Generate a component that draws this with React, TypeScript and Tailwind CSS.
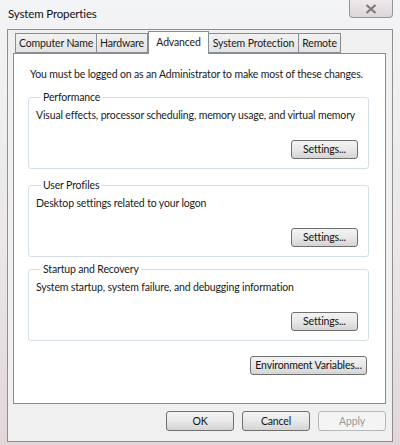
import React from "react";

const tabs = [
  { label: "Computer Name", w: "w-[82px]" },
  { label: "Hardware", w: "w-[52px]" },
  { label: "Advanced", w: "w-[61px]", active: true },
  { label: "System Protection", w: "w-[91px]" },
  { label: "Remote", w: "w-[43px]" },
];

const groups = [
  {
    title: "Performance",
    text: "Visual effects, processor scheduling, memory usage, and virtual memory",
    mt: "mt-[8px]",
  },
  { title: "User Profiles", text: "Desktop settings related to your logon", mt: "mt-[9px]" },
  {
    title: "Startup and Recovery",
    text: "System startup, system failure, and debugging information",
    mt: "mt-[5px]",
  },
];

function Button({
  children,
  className = "",
  disabled = false,
}: {
  children: React.ReactNode;
  className?: string;
  disabled?: boolean;
}) {
  return (
    <button
      className={
        "flex items-center justify-center whitespace-nowrap rounded-[3px] border text-[10.5px] leading-none tracking-[-0.15px] " +
        (disabled
          ? "border-[#b5b9bc] bg-[#f4f4f4] text-[#9a9a9a] "
          : "border-[#707070] bg-gradient-to-b from-[#f3f3f3] via-[#e8e8e8] to-[#d4d4d4] text-[#111] ") +
        className
      }
    >
      {children}
    </button>
  );
}

export default function App() {
  return (
    <div className="flex h-[445px] w-[400px] flex-col whitespace-nowrap bg-gradient-to-b from-[#f3f4f6] via-[#ece8ea] to-[#e2d6d9] font-['Lato','Liberation_Sans',sans-serif] tracking-[-0.15px] text-[#1a1a1a]">
      {/* Title bar */}
      <div className="flex h-[29px] shrink-0 items-start justify-between">
        <span className="mt-[6px] pl-[8px] text-[11.5px] leading-[16px] text-[#111]">System Properties</span>
        <div className="mr-[7px] flex h-[18px] w-[44px] items-center justify-center rounded-b-[4px] border border-t-0 border-[#9a9298] bg-gradient-to-b from-[#eeeaec] to-[#ddd6d9]">
          <svg width="12" height="10" viewBox="0 0 12 10">
            <path d="M1.5 1 L10.5 9 M10.5 1 L1.5 9" stroke="#7a7a7a" strokeWidth="2.2" fill="none" />
          </svg>
        </div>
      </div>

      {/* Client area */}
      <div className="mx-[7px] mb-[3px] flex flex-1 flex-col border border-[#8f8f90] bg-[#f0f0f0] pt-[1px]">
        <div className="ml-[5px] mr-[6px] flex flex-col">
          {/* Tabs */}
          <div className="relative z-10 flex h-[22px] items-end pl-[2px]">
            {tabs.map((t) =>
              t.active ? (
                <div
                  key={t.label}
                  className={`${t.w} -mb-px flex h-[23px] items-start justify-center border border-b-0 border-[#898c95] bg-white pt-[3px] text-[10.5px] leading-[14px]`}
                >
                  {t.label}
                </div>
              ) : (
                <div
                  key={t.label}
                  className={`${t.w} flex h-[20px] items-center justify-center border border-[#898c95] bg-gradient-to-b from-[#f2f2f2] to-[#e3e3e3] text-[10.5px] leading-[14px] -ml-px first:ml-0`}
                >
                  {t.label}
                </div>
              )
            )}
          </div>

          {/* Tab panel */}
          <div className="flex h-[351px] flex-col border border-[#898c95] bg-white pl-[14px] pr-[16px] pt-[12px]">
            <p className="ml-[2px] text-[10.5px] leading-[16px]">
              You must be logged on as an Administrator to make most of these changes.
            </p>
            {groups.map((g) => (
              <fieldset
                key={g.title}
                className={`${g.mt} flex min-w-0 flex-col rounded-[3px] border border-[#d5dfe5] pb-[9px] pl-[7px]`}
              >
                <legend className="ml-[5px] px-[2px] text-[10.5px] leading-[14px]">{g.title}</legend>
                <p className="mt-[3px] text-[10.5px] leading-[16px]">{g.text}</p>
                <Button className="mr-[10px] mt-[17px] h-[19px] w-[67px] self-end">Settings...</Button>
              </fieldset>
            ))}
            <Button className="mr-[2px] mt-[15px] h-[19px] w-[117px] self-end">Environment Variables...</Button>
          </div>

          {/* Dialog buttons */}
          <div className="mt-[7px] flex justify-end gap-[8px]">
            <Button className="h-[20px] w-[68px]">OK</Button>
            <Button className="h-[20px] w-[68px]">Cancel</Button>
            <Button className="h-[20px] w-[68px]" disabled>
              Apply
            </Button>
          </div>
        </div>
      </div>
    </div>
  );
}
